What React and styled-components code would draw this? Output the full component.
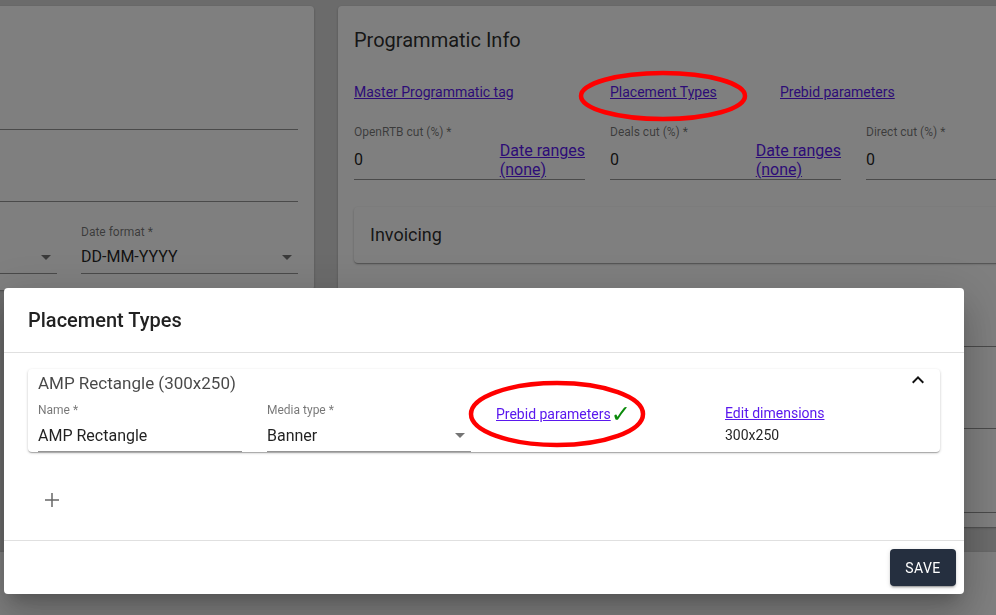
import React from "react";
import styled, { createGlobalStyle } from "styled-components";

const GlobalStyle = createGlobalStyle`
  html, body {
    margin: 0;
    padding: 0;
    background: #d7d7d7;
    font-family: Roboto, "Liberation Sans", sans-serif;
    overflow: hidden;
    height: 100%;
  }
`;

const LINK = "#5a18ee";

const Page = styled.div`
  display: flex;
  flex-direction: column;
  gap: 25px;
  padding-top: 6px;
  margin-left: -176px;
  width: 1300px;
`;

const TopRow = styled.div`
  display: flex;
  align-items: flex-start;
  gap: 24px;
`;

const Card = styled.div`
  background: #fff;
  border-radius: 4px;
  box-shadow: 0 1px 3px rgba(0, 0, 0, 0.2), 0 1px 1px rgba(0, 0, 0, 0.14);
  box-sizing: border-box;
  width: ${({ w }) => w || "auto"};
  height: ${({ h }) => h || "auto"};
  padding: ${({ pad }) => pad || "16px"};
`;

const CardTitle = styled.h2`
  margin: 6px 0 0;
  font-size: 20px;
  line-height: 24px;
  font-weight: 400;
  color: rgba(0, 0, 0, 0.84);
`;

const LinkRow = styled.div`
  display: grid;
  grid-template-columns: 256px 170px auto;
  margin-top: 28px;
`;

const Link = styled.a`
  color: ${LINK};
  text-decoration: underline;
  font-size: ${({ size }) => size || 14}px;
  line-height: ${({ lh }) => lh || 24}px;
  cursor: pointer;
  white-space: nowrap;
`;

const FieldGrid = styled.div`
  display: grid;
  grid-template-columns: repeat(${({ cols }) => cols}, ${({ colW }) => colW}px);
  column-gap: ${({ gap }) => gap}px;
  margin-top: ${({ mt }) => mt || 0}px;
`;

const Field = styled.div`
  display: flex;
  flex-direction: column;
  padding-top: ${({ pt }) => pt || 0}px;
  min-width: 0;
`;

const Label = styled.label`
  font-size: 12px;
  line-height: 16px;
  color: rgba(0, 0, 0, 0.54);
  white-space: nowrap;
`;

const InputBox = styled.div`
  display: flex;
  align-items: flex-end;
  justify-content: space-between;
  height: ${({ h }) => h || 33}px;
  border-bottom: 1px solid rgba(0, 0, 0, 0.42);
`;

const Value = styled.span`
  font-size: 16px;
  line-height: 19px;
  color: rgba(0, 0, 0, 0.87);
  padding-bottom: ${({ pb }) => (pb === undefined ? 7 : pb)}px;
  white-space: nowrap;
`;

const SideLink = styled(Link)`
  font-size: 16px;
  line-height: 19px;
`;

const Arrow = styled.svg`
  width: 24px;
  height: 24px;
  fill: rgba(0, 0, 0, 0.54);
  margin-bottom: 4px;
  margin-right: -1px;
  flex-shrink: 0;
`;

const Panel = styled.div`
  margin-top: 27px;
  height: 56px;
  display: flex;
  align-items: center;
  padding: 0 16px 2px;
  box-sizing: border-box;
  border-radius: 4px;
  box-shadow: 0 1px 3px rgba(0, 0, 0, 0.2), 0 1px 1px rgba(0, 0, 0, 0.14),
    0 2px 1px -1px rgba(0, 0, 0, 0.12);
  font-size: 18px;
  color: rgba(0, 0, 0, 0.84);
`;

const Overlay = styled.div`
  position: fixed;
  inset: 0;
  background: rgba(0, 0, 0, 0.5);
`;

const Dialog = styled.div`
  position: fixed;
  left: 4px;
  top: 288px;
  width: 960px;
  background: #fff;
  border-radius: 4px;
  box-shadow: 0 11px 15px -7px rgba(0, 0, 0, 0.2),
    0 24px 38px 3px rgba(0, 0, 0, 0.14), 0 9px 46px 8px rgba(0, 0, 0, 0.12);
  display: flex;
  flex-direction: column;
`;

const DialogTitle = styled.h2`
  margin: 0;
  padding: 16px 24px;
  font-size: 20px;
  line-height: 32px;
  font-weight: 500;
  color: rgba(0, 0, 0, 0.87);
  border-bottom: 1px solid #e0e0e0;
`;

const DialogContent = styled.div`
  padding: 16px 24px;
  border-bottom: 1px solid #e0e0e0;
`;

const TypeCard = styled.div`
  border-radius: 4px;
  box-shadow: 0 1px 3px rgba(0, 0, 0, 0.2), 0 1px 1px rgba(0, 0, 0, 0.14),
    0 2px 1px -1px rgba(0, 0, 0, 0.12);
  padding: 0 10px;
`;

const TypeHead = styled.div`
  display: flex;
  align-items: center;
  justify-content: space-between;
  height: 28px;
`;

const TypeTitle = styled.span`
  font-size: 17px;
  color: rgba(0, 0, 0, 0.72);
`;

const Chevron = styled.svg`
  width: 24px;
  height: 24px;
  fill: #111;
  margin-top: -6px;
`;

const LinkCell = styled.div`
  display: flex;
  flex-direction: column;
  padding-top: 6px;
`;

const Check = styled.span`
  color: #0a8a0a;
  font-family: "DejaVu Sans", sans-serif;
  font-size: 24px;
  font-weight: 700;
  line-height: 16px;
  display: inline-block;
  transform: translateY(3px);
`;

const Plain = styled.span`
  font-size: 14px;
  line-height: 20px;
  margin-top: 3px;
  color: rgba(0, 0, 0, 0.87);
`;

const AddButton = styled.button`
  margin-top: 24px;
  width: 48px;
  height: 48px;
  border: none;
  background: none;
  padding: 0;
  display: flex;
  align-items: center;
  justify-content: center;
  cursor: pointer;
  svg {
    width: 24px;
    height: 24px;
    fill: rgba(0, 0, 0, 0.6);
  }
`;

const Actions = styled.div`
  display: flex;
  justify-content: flex-end;
  padding: 8px;
`;

const SaveButton = styled.button`
  height: 37px;
  width: 66px;
  border: none;
  border-radius: 4px;
  background: #252f3f;
  color: #fff;
  font-family: Roboto, sans-serif;
  font-size: 14px;
  font-weight: 400;
  letter-spacing: 0.4px;
  box-shadow: 0 3px 1px -2px rgba(0, 0, 0, 0.2), 0 2px 2px rgba(0, 0, 0, 0.14),
    0 1px 5px rgba(0, 0, 0, 0.12);
  cursor: pointer;
`;

const Marks = styled.svg`
  position: fixed;
  left: 0;
  top: 0;
  width: 996px;
  height: 615px;
  pointer-events: none;
`;

const DropArrow = () => (
  <Arrow viewBox="0 0 24 24">
    <path d="M7 10l5 5 5-5z" />
  </Arrow>
);

const CutField = ({ label }) => (
  <Field>
    <Label>{label}</Label>
    <InputBox h={39}>
      <Value pb={10}>0</Value>
      <SideLink>
        Date ranges
        <br />
        (none)
      </SideLink>
    </InputBox>
  </Field>
);

export default function App() {
  return (
    <>
      <GlobalStyle />
      <Page>
        <TopRow>
          <Card w="490px" h="284px">
            <Field pt={36}>
              <InputBox h={71} />
            </Field>
            <Field>
              <InputBox h={71} />
            </Field>
            <FieldGrid cols={2} colW={217} gap={24}>
              <Field pt={22}>
                <Label>&nbsp;</Label>
                <InputBox>
                  <Value>&nbsp;</Value>
                  <DropArrow />
                </InputBox>
              </Field>
              <Field pt={22}>
                <Label>Date format *</Label>
                <InputBox>
                  <Value>DD-MM-YYYY</Value>
                  <DropArrow />
                </InputBox>
              </Field>
            </FieldGrid>
          </Card>
          <Card w="760px" pad="16px 16px 14px">
            <CardTitle>Programmatic Info</CardTitle>
            <LinkRow>
              <div>
                <Link>Master Programmatic tag</Link>
              </div>
              <div>
                <Link>Placement Types</Link>
              </div>
              <div>
                <Link>Prebid parameters</Link>
              </div>
            </LinkRow>
            <FieldGrid cols={3} colW={231} gap={25} mt={20}>
              <CutField label="OpenRTB cut (%) *" />
              <CutField label="Deals cut (%) *" />
              <Field>
                <Label>Direct cut (%) *</Label>
                <InputBox h={39}>
                  <Value pb={10}>0</Value>
                </InputBox>
              </Field>
            </FieldGrid>
            <Panel>Invoicing</Panel>
            <Field>
              <InputBox h={83} />
            </Field>
            <Field>
              <InputBox h={81} />
            </Field>
            <Field>
              <InputBox h={83} />
            </Field>
          </Card>
        </TopRow>
        <Card w="1300px" h="200px" />
      </Page>

      <Overlay />

      <Dialog>
        <DialogTitle>Placement Types</DialogTitle>
        <DialogContent>
          <TypeCard>
            <TypeHead>
              <TypeTitle>AMP Rectangle (300x250)</TypeTitle>
              <Chevron viewBox="0 0 24 24">
                <path d="M12 8l-6 6 1.41 1.41L12 10.83l4.59 4.58L18 14z" />
              </Chevron>
            </TypeHead>
            <FieldGrid cols={4} colW={204} gap={25}>
              <Field pt={5}>
                <Label>Name *</Label>
                <InputBox>
                  <Value pb={6}>AMP Rectangle</Value>
                </InputBox>
              </Field>
              <Field pt={5}>
                <Label>Media type *</Label>
                <InputBox>
                  <Value pb={6}>Banner</Value>
                  <DropArrow />
                </InputBox>
              </Field>
              <LinkCell>
                <div>
                  <Link lh={16}>Prebid parameters</Link>
                  <Check>✓</Check>
                </div>
              </LinkCell>
              <LinkCell>
                <div>
                  <Link lh={16}>Edit dimensions</Link>
                </div>
                <Plain>300x250</Plain>
              </LinkCell>
            </FieldGrid>
          </TypeCard>
          <AddButton aria-label="add">
            <svg viewBox="0 0 24 24">
              <path d="M19 12.75h-6.25V19h-1.5v-6.25H5v-1.5h6.25V5h1.5v6.25H19z" />
            </svg>
          </AddButton>
        </DialogContent>
        <Actions>
          <SaveButton>SAVE</SaveButton>
        </Actions>
      </Dialog>

      <Marks viewBox="0 0 996 615">
        <ellipse cx="663" cy="96" rx="82" ry="23" fill="none" stroke="#ff0000" strokeWidth="4.5" />
        <ellipse cx="557" cy="414" rx="86" ry="31" fill="none" stroke="#ff0000" strokeWidth="4.5" />
      </Marks>
    </>
  );
}
